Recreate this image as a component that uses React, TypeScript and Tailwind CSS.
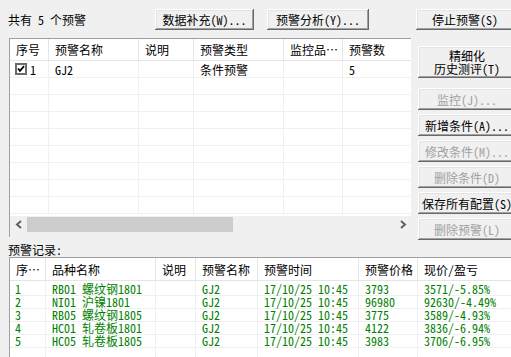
import React from "react";

const font =
    "font-['Noto_Sans_Mono_CJK_SC','Noto_Sans_CJK_SC','DejaVu_Sans_Mono',monospace]";

const raised =
    "shadow-[inset_-1px_-1px_#696969,inset_1px_1px_#ffffff,inset_-2px_-2px_#a0a0a0,inset_2px_2px_#e3e3e3]";

function Btn({
    children,
    className = "",
    disabled = false,
}: {
    children: React.ReactNode;
    className?: string;
    disabled?: boolean;
}) {
    return (
        <div
            className={`flex shrink-0 items-center justify-center bg-[#f0f0f0] text-[12px] leading-[13px] whitespace-nowrap ${raised} ${
                disabled ? "text-[#a0a0a0]" : "text-black"
            } ${className}`}
        >
            {children}
        </div>
    );
}

const topCols = [
    { w: "w-[39px]", label: "序号" },
    { w: "w-[90px]", label: "预警名称" },
    { w: "w-[55px]", label: "说明" },
    { w: "w-[90px]", label: "预警类型" },
    { w: "w-[59px]", label: "监控品…" },
    { w: "w-[67px]", label: "预警数" },
];

const logCols = [
    { w: "w-[36px]", label: "序…" },
    { w: "w-[110px]", label: "品种名称" },
    { w: "w-[40px]", label: "说明" },
    { w: "w-[62px]", label: "预警名称" },
    { w: "w-[101px]", label: "预警时间" },
    { w: "w-[59px]", label: "预警价格" },
    { w: "w-[100px]", label: "现价/盈亏" },
];

const logs = [
    ["1", "RB01 螺纹钢1801", "", "GJ2", "17/10/25 10:45", "3793", "3571/-5.85%"],
    ["2", "NI01 沪镍1801", "", "GJ2", "17/10/25 10:45", "96980", "92630/-4.49%"],
    ["3", "RB05 螺纹钢1805", "", "GJ2", "17/10/25 10:45", "3775", "3589/-4.93%"],
    ["4", "HC01 轧卷板1801", "", "GJ2", "17/10/25 10:45", "4122", "3836/-6.94%"],
    ["5", "HC05 轧卷板1805", "", "GJ2", "17/10/25 10:45", "3983", "3706/-6.95%"],
];

function Checkbox() {
    return (
        <div className="flex h-[12px] w-[12px] items-center justify-center border-2 border-[#6b6b6b] bg-white">
            <svg width="8" height="8" viewBox="0 0 8 8">
                <path d="M1 3.5 L3 5.8 L7 1.2" stroke="#000" strokeWidth="1.8" fill="none" />
            </svg>
        </div>
    );
}

export default function App() {
    return (
        <div className={`flex h-[357px] w-[511px] flex-col overflow-hidden bg-[#f0f0f0] text-[12px] text-black ${font}`}>
            <div className="flex h-[241px] shrink-0">
                {/* left: summary + alert list */}
                <div className="flex w-[416px] shrink-0 flex-col">
                    <div className="flex h-[38px] shrink-0 items-start pt-[9px]">
                        <span className="ml-[8px] mt-[4px] w-[147px] leading-[13px]">共有 5 个预警</span>
                        <Btn className="h-[21px] w-[99px]">数据补充(W)...</Btn>
                        <Btn className="ml-[13px] h-[21px] w-[102px]">预警分析(Y)...</Btn>
                    </div>
                    <div className="ml-[9px] flex h-[199px] w-[402px] flex-col border-t border-l border-[#a0a0a0] bg-[#f0f0f0]">
                        <div className="flex h-[22px] shrink-0 border-b border-[#e5e5e5] bg-white">
                            {topCols.map((c) => (
                                <div
                                    key={c.label}
                                    className={`${c.w} flex shrink-0 items-center overflow-hidden border-r border-[#e5e5e5] pl-[6px] leading-[13px] whitespace-nowrap last:border-r-0`}
                                >
                                    {c.label}
                                </div>
                            ))}
                        </div>
                        <div className="flex shrink-0 flex-col bg-white">
                            {Array.from({ length: 9 }).map((_, r) => (
                                <div key={r} className="flex h-[17px] shrink-0 border-b border-[#f0f0f0]">
                                    {topCols.map((c, i) => (
                                        <div
                                            key={i}
                                            className={`${c.w} flex shrink-0 items-center border-r border-[#f0f0f0] leading-[13px] last:border-r-0 ${
                                                i === 0 ? "pl-[5px]" : "pl-[6px]"
                                            }`}
                                        >
                                            {r === 0 && i === 0 && (
                                                <>
                                                    <Checkbox />
                                                    <span className="ml-[3px]">1</span>
                                                </>
                                            )}
                                            {r === 0 && i === 1 && "GJ2"}
                                            {r === 0 && i === 3 && "条件预警"}
                                            {r === 0 && i === 5 && "5"}
                                        </div>
                                    ))}
                                </div>
                            ))}
                        </div>
                        <div className="h-[2px] shrink-0 bg-white" />
                        <div className="flex h-[17px] shrink-0 items-center">
                            <div className="flex w-[17px] shrink-0 justify-center">
                                <svg width="8" height="9" viewBox="0 0 8 9">
                                    <path d="M6 1 L2 4.5 L6 8" stroke="#606060" strokeWidth="2" fill="none" />
                                </svg>
                            </div>
                            <div className="h-[15px] w-[206px] shrink-0 bg-[#cdcdcd]" />
                            <div className="flex-1" />
                            <div className="flex w-[17px] shrink-0 justify-center">
                                <svg width="8" height="9" viewBox="0 0 8 9">
                                    <path d="M2 1 L6 4.5 L2 8" stroke="#606060" strokeWidth="2" fill="none" />
                                </svg>
                            </div>
                        </div>
                    </div>
                </div>

                {/* right: action buttons */}
                <div className="flex flex-col pt-[9px]">
                    <Btn className="h-[21px] w-[98px]">停止预警(S)</Btn>
                    <Btn className="ml-[2px] mt-[16px] h-[32px] w-[98px] flex-col leading-[12px]">
                        <span>精细化</span>
                        <span>历史测评(T)</span>
                    </Btn>
                    <div className="ml-[2px] mt-[10px] flex flex-col gap-[4px]">
                        <Btn disabled className="h-[22px] w-[98px]">监控(J)...</Btn>
                        <Btn className="h-[22px] w-[98px]">新增条件(A)...</Btn>
                        <Btn disabled className="h-[22px] w-[98px]">修改条件(M)...</Btn>
                        <Btn disabled className="h-[22px] w-[98px]">删除条件(D)</Btn>
                        <Btn className="h-[22px] w-[98px]">保存所有配置(S)</Btn>
                        <Btn disabled className="h-[22px] w-[98px]">删除预警(L)</Btn>
                    </div>
                </div>
            </div>

            <div className="ml-[8px] flex h-[16px] shrink-0 items-center leading-[13px]">预警记录:</div>

            {/* alert log */}
            <div className="ml-[9px] flex flex-1 flex-col border-t border-l border-[#a0a0a0] bg-white">
                <div className="flex h-[23px] shrink-0 border-b border-[#e5e5e5]">
                    {logCols.map((c) => (
                        <div
                            key={c.label}
                            className={`${c.w} flex shrink-0 items-center border-r border-[#e5e5e5] pl-[6px] leading-[13px] whitespace-nowrap`}
                        >
                            {c.label}
                        </div>
                    ))}
                </div>
                <div className="flex flex-1 flex-col">
                    <div className="flex h-[2px] shrink-0">
                        {logCols.map((c, i) => (
                            <div key={i} className={`${c.w} shrink-0 border-r border-[#f0f0f0]`} />
                        ))}
                    </div>
                    {logs.map((row, r) => (
                        <div key={r} className="flex h-[13px] shrink-0 border-b border-[#f0f0f0] text-[#008000]">
                            {logCols.map((c, i) => (
                                <div
                                    key={i}
                                    className={`${c.w} flex h-[12px] shrink-0 items-center border-r border-[#f0f0f0] leading-[12px] whitespace-nowrap ${
                                        i === 0 ? "pl-[5px]" : "pl-[6px]"
                                    }`}
                                >
                                    {row[i]}
                                </div>
                            ))}
                        </div>
                    ))}
                    <div className="flex flex-1">
                        {logCols.map((c, i) => (
                            <div key={i} className={`${c.w} shrink-0 border-r border-[#f0f0f0]`} />
                        ))}
                    </div>
                </div>
            </div>
        </div>
    );
}
